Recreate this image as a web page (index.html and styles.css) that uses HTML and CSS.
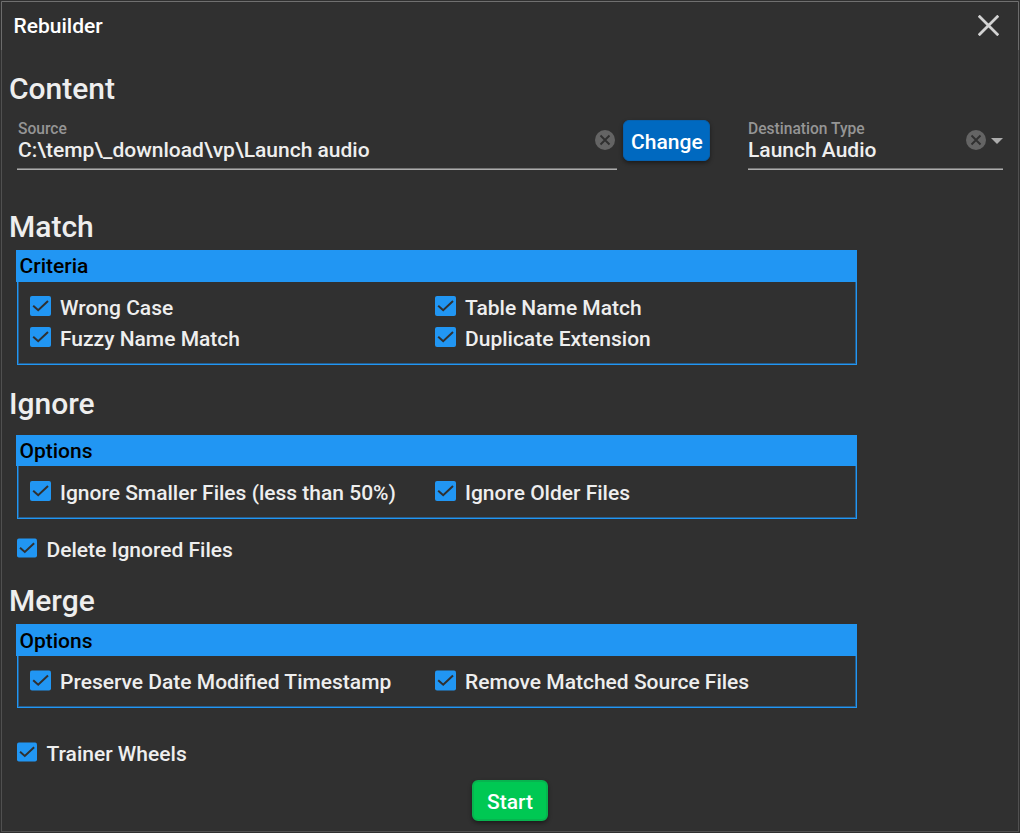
FILE: index.html
```html
<!DOCTYPE html>
<html lang="en">
<head>
<meta charset="utf-8">
<title>Rebuilder</title>
<link rel="stylesheet" href="styles.css">
</head>
<body>
<svg class="defs" width="0" height="0">
  <symbol id="box" viewBox="0 0 21 20"><rect width="21" height="20" rx="2" fill="#2196f3" stroke="none"/><path d="M3.2 9.7 8.2 14.2 18 5" fill="none" stroke="#303030" stroke-width="2"/></symbol>
  <symbol id="clear" viewBox="0 0 20 20"><circle cx="10" cy="10" r="10" fill="#646464"/><path d="M5.5 5.5 14.5 14.5M14.5 5.5 5.5 14.5" stroke="#303030" stroke-width="1.9"/></symbol>
</svg>
<div class="window">
  <header class="titlebar">
    <span class="title">Rebuilder</span>
    <svg class="close" viewBox="0 0 21 21"><path d="M.7.7 20.3 20.3M20.3.7.7 20.3" stroke="#d2d2d2" stroke-width="2.8"/></svg>
  </header>
  <main class="content">
    <h2 class="heading">Content</h2>
    <div class="fields">
      <div class="field source">
        <div class="text"><div class="caption">Source</div><div class="value">C:\temp\_download\vp\Launch audio</div></div>
        <svg class="clear"><use href="#clear"/></svg>
      </div>
      <button class="button change">Change</button>
      <div class="field type">
        <div class="text"><div class="caption">Destination Type</div><div class="value">Launch Audio</div></div>
        <svg class="clear"><use href="#clear"/></svg>
        <svg class="arrow" viewBox="0 0 12 6"><path d="M0 0H12L6 6Z" fill="#acacac"/></svg>
      </div>
    </div>

    <h2 class="heading match">Match</h2>
    <section class="panel criteria">
      <h3 class="bar">Criteria</h3>
      <div class="options">
        <label class="option"><svg class="box"><use href="#box"/></svg><span>Wrong Case</span></label>
        <label class="option"><svg class="box"><use href="#box"/></svg><span>Table Name Match</span></label>
        <label class="option"><svg class="box"><use href="#box"/></svg><span>Fuzzy Name Match</span></label>
        <label class="option"><svg class="box"><use href="#box"/></svg><span>Duplicate Extension</span></label>
      </div>
    </section>

    <h2 class="heading ignore">Ignore</h2>
    <section class="panel ignore-panel">
      <h3 class="bar">Options</h3>
      <div class="options">
        <label class="option"><svg class="box"><use href="#box"/></svg><span>Ignore Smaller Files (less than 50%)</span></label>
        <label class="option"><svg class="box"><use href="#box"/></svg><span>Ignore Older Files</span></label>
      </div>
    </section>
    <label class="option single delete"><svg class="box"><use href="#box"/></svg><span>Delete Ignored Files</span></label>

    <h2 class="heading merge">Merge</h2>
    <section class="panel merge-panel">
      <h3 class="bar">Options</h3>
      <div class="options">
        <label class="option"><svg class="box"><use href="#box"/></svg><span>Preserve Date Modified Timestamp</span></label>
        <label class="option"><svg class="box"><use href="#box"/></svg><span>Remove Matched Source Files</span></label>
      </div>
    </section>
    <label class="option single trainer"><svg class="box"><use href="#box"/></svg><span>Trainer Wheels</span></label>
    <button class="button start">Start</button>
  </main>
</div>
</body>
</html>
```

FILE: styles.css
```css
* { box-sizing: border-box; }
body {
  margin: 0;
  padding: 1px;
  height: 833px;
  overflow: hidden;
  background: #303030;
  color: #eeeeee;
  font: 500 21px/31px Roboto, sans-serif;
}
.defs { position: absolute; }
.window {
  height: 831px;
  border: 1px solid #505050;
  border-top-color: #707070;
}
.titlebar {
  display: flex;
  justify-content: space-between;
  align-items: center;
  height: 48px;
  margin: 0 -1px;
  padding: 0 19px 0 11.5px;
  border: solid #6c6c6c;
  border-width: 0 1px;
  color: #ffffff;
}
.close { width: 21px; height: 21px; margin-bottom: 2px; }
.content { display: flex; flex-direction: column; align-items: flex-start; padding-left: 7px; }
.heading { margin: 21px 0 0; font-size: 30px; font-weight: 500; line-height: 36px; }
.fields { display: flex; align-items: flex-start; height: 62px; margin-left: 8px; padding-top: 12px; }
.field { display: flex; height: 51px; border-bottom: 1px solid #acacac; box-shadow: inset 0 -1px #747474; }
.source { width: 600px; padding: 0 2px 0 1px; }
.type { width: 255px; margin-left: 38px; }
.text { flex: 1; }
.caption { height: 18px; color: #959595; font-size: 15.6px; line-height: 20px; }
.value { line-height: 26px; }
.clear { width: 20px; height: 20px; margin-top: 11px; }
.arrow { width: 12px; height: 6px; margin: 19px 0 0 5px; }
.button {
  padding: 0;
  border: 1px solid;
  border-radius: 6px;
  color: #ffffff;
  font: 500 21px/38px Roboto, sans-serif;
  box-shadow: 0 2px 4px rgba(0, 0, 0, .45);
}
.change { width: 87px; height: 41px; margin: 1px 0 0 6.4px; padding-top: 2px; background: #0069c0; border-color: #0761ae; }
.type { margin-left: 37.6px; }
.match { margin-top: 40px; }
.panel { width: 841px; margin: 5px 0 0 7px; }
.bar { height: 32px; margin: 0; padding-left: 3.5px; background: #2196f3; color: #000; font-size: 21px; font-weight: 500; line-height: 32px; }
.options {
  display: grid;
  grid-template-columns: 405px 1fr;
  grid-auto-rows: 31px;
  margin-left: 1px;
  padding: 10px 0 0 12px;
  border: solid #2196f3;
  border-width: 0 1px 1px;
  box-shadow: inset 1px -1px #285e8c, inset -1px 0 #285e8c;
}
.option { display: flex; gap: 9px; line-height: 33px; white-space: nowrap; }
.box { width: 21px; height: 20px; margin-top: 4px; }
.criteria .options { height: 83px; }
.ignore { margin-top: 21px; }
.ignore-panel { margin-top: 13px; }
.ignore-panel .bar { height: 31px; }
.ignore-panel .options { height: 53px; padding-top: 11px; }
.single { height: 31px; margin-left: 8px; gap: 9.5px; }
.single .box { width: 20px; }
.delete { margin-top: 15px; }
.merge { margin-top: 18px; }
.merge-panel .bar { line-height: 34px; }
.merge-panel .options { height: 52px; }
.merge-panel .box { height: 21px; }
.trainer { margin-top: 30px; }
.start { width: 76px; height: 41px; margin: 11px 0 0 463px; padding-top: 3px; background: #00c853; border: 2px solid #07b44f; line-height: 34px; }
```
